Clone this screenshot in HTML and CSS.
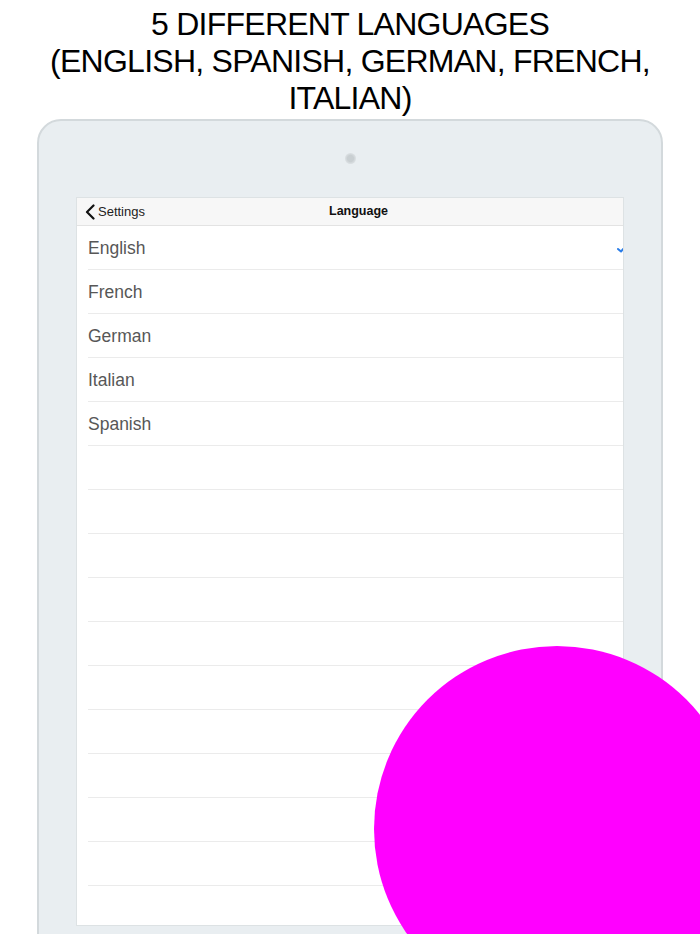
FILE: index.html
```html
<!DOCTYPE html>
<html>
<head>
<meta charset="utf-8">
<link rel="stylesheet" href="styles.css">
</head>
<body>
<div class="page">
<h1 class="title">5 DIFFERENT LANGUAGES<br>(ENGLISH, SPANISH, GERMAN, FRENCH,<br>ITALIAN)</h1>
<div class="device">
  <div class="camera"></div>
  <div class="screen">
    <div class="nav">
      <div class="back">
        <svg class="chev" width="10" height="16" viewBox="0 0 10 16"><path d="M8.5 1.5 L2 8 L8.5 14.5" fill="none" stroke="#111" stroke-width="2.2" stroke-linecap="round" stroke-linejoin="round"/></svg>
        <span>Settings</span>
      </div>
      <div class="nav-title">Language</div>
    </div>
    <div class="list">
      <div class="row"><span>English</span><svg class="check" width="10" height="8" viewBox="0 0 10 8"><path d="M1 4 L4 6.5 L9 1" fill="none" stroke="#2a7de8" stroke-width="2" stroke-linecap="round" stroke-linejoin="round"/></svg></div>
      <div class="row"><span>French</span></div>
      <div class="row"><span>German</span></div>
      <div class="row"><span>Italian</span></div>
      <div class="row"><span>Spanish</span></div>
      <div class="row"></div>
      <div class="row"></div>
      <div class="row"></div>
      <div class="row"></div>
      <div class="row"></div>
      <div class="row"></div>
      <div class="row"></div>
      <div class="row"></div>
      <div class="row"></div>
      <div class="row"></div>
      <div class="row last"></div>
    </div>
  </div>
</div>
<div class="blob"></div>
</div>
</body>
</html>
```
FILE: styles.css
```css
html, body {
  margin: 0;
  padding: 0;
  background: #fff;
  font-family: "Liberation Sans", Arial, sans-serif;
}
.page {
  position: relative;
  width: 700px;
  height: 934px;
  overflow: hidden;
}
.title {
  margin: 0;
  padding-top: 6px;
  height: 113px;
  box-sizing: border-box;
  font-weight: normal;
  font-size: 32px;
  line-height: 37px;
  text-align: center;
  color: #000;
  letter-spacing: -0.75px;
}
.device {
  margin-left: 37px;
  margin-top: 6px;
  width: 626px;
  height: 840px;
  box-sizing: border-box;
  border: 2px solid #d3d9dc;
  border-radius: 24px;
  background: #e9eef1;
  padding-top: 32px;
}
.camera {
  width: 11px;
  height: 11px;
  margin: 0 auto;
  border-radius: 50%;
  background: radial-gradient(circle, #c9cfd2 0 40%, #d7dcdf 60%, #e2e7ea 100%);
}
.screen {
  margin: 33px 0 0 37px;
  width: 548px;
  height: 729px;
  box-sizing: border-box;
  border: 1px solid #dde2e4;
  background: #fff;
  overflow: hidden;
}
.nav {
  height: 28px;
  box-sizing: border-box;
  background: #f7f7f7;
  border-bottom: 1px solid #e3e3e3;
  display: flex;
  align-items: center;
  position: relative;
}
.back {
  display: flex;
  align-items: center;
  gap: 3px;
  padding-left: 8px;
  font-size: 13px;
  color: #222;
}
.chev { display: block; }
.nav-title {
  position: absolute;
  left: 252px;
  top: 0;
  line-height: 27px;
  font-size: 12.5px;
  font-weight: bold;
  color: #111;
}
.list { padding-left: 11px; }
.row {
  height: 44px;
  box-sizing: border-box;
  border-bottom: 1px solid #ebebeb;
  display: flex;
  align-items: center;
  justify-content: space-between;
  font-size: 17.5px;
  color: #575757;
}
.row span { margin-top: 1px; }
.check { margin-right: -4px; margin-top: 2px; }
.blob {
  position: absolute;
  left: 374px;
  top: 646px;
  width: 366px;
  height: 366px;
  border-radius: 50%;
  background: #ff00ff;
}
```
